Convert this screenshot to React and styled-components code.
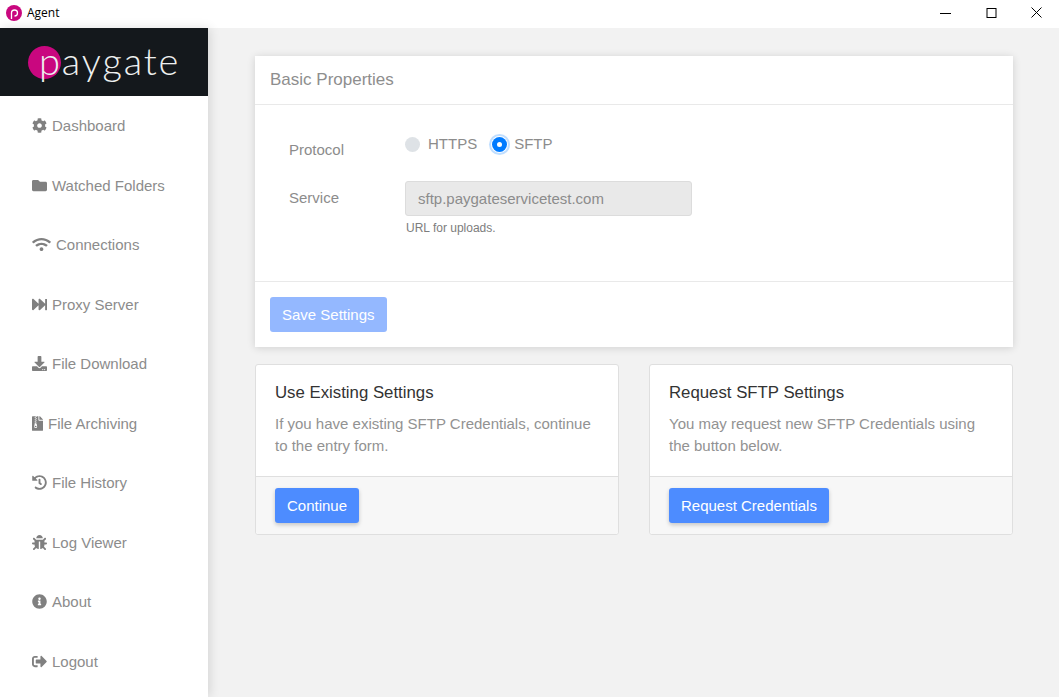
import React from 'react'
import styled, { createGlobalStyle } from 'styled-components'
import {
  FaCog, FaFolder, FaWifi, FaFastForward, FaDownload, FaFileArchive,
  FaHistory, FaBug, FaInfoCircle, FaSignOutAlt,
} from 'react-icons/fa'

const GlobalStyle = createGlobalStyle`
  html, body {
    margin: 0;
    height: 100%;
    overflow: hidden;
    font-family: "Liberation Sans", Arial, sans-serif;
  }
  * { box-sizing: border-box; }
`

const Window = styled.div`
  width: 1059px;
  height: 697px;
  display: flex;
  flex-direction: column;
  background: #f2f2f2;
`

const TitleBar = styled.div`
  height: 28px;
  flex: none;
  background: #fff;
  display: flex;
  align-items: center;
  padding: 0 0 3px 6px;
  font-size: 12px;
  color: #000;
`

const TitleName = styled.span`
  margin-left: 5px;
  flex: 1;
  font-family: "Open Sans", sans-serif;
`

const WinControls = styled.div`
  display: flex;
  height: 100%;
`

const WinButton = styled.div`
  width: 45.5px;
  height: 100%;
  display: flex;
  align-items: center;
  justify-content: center;
  padding-left: 1px;
`

const Shell = styled.div`
  flex: 1;
  display: flex;
  min-height: 0;
`

const Sidebar = styled.aside`
  width: 208px;
  flex: none;
  background: #fff;
  box-shadow: 2px 0 10px rgba(0, 0, 0, 0.12);
  display: flex;
  flex-direction: column;
`

const Brand = styled.div`
  height: 68px;
  background: #14181c;
  display: flex;
  align-items: center;
  padding-left: 28px;
`

const BrandMark = styled.span`
  width: 33px;
  height: 33px;
  border-radius: 50%;
  background: #c9077f;
  display: block;
  flex: none;
`

const BrandName = styled.span`
  margin-left: -22px;
  font-family: Lato, sans-serif;
  font-weight: 300;
  font-size: 38px;
  line-height: 33px;
  letter-spacing: 1.9px;
  color: #eef0f0;
  position: relative;
  top: -2px;
`

const Nav = styled.nav`
  display: flex;
  flex-direction: column;
`

const NavItem = styled.a`
  height: 59.5px;
  display: flex;
  align-items: center;
  padding-left: 32px;
  gap: 5px;
  font-size: 15px;
  color: #8c8c8c;
  svg {
    flex: none;
    width: ${p => p.$iconWidth}px;
    height: 15px;
    color: #808080;
  }
`

const Main = styled.main`
  flex: 1;
  padding: 28px 46px 0 47px;
  display: flex;
  flex-direction: column;
  gap: 17px;
`

const PropsCard = styled.section`
  background: #fff;
  box-shadow: 0 1px 8px rgba(0, 0, 0, 0.14);
  height: 291px;
  display: flex;
  flex-direction: column;
`

const PropsHeader = styled.h2`
  margin: 0;
  height: 49px;
  flex: none;
  border-bottom: 1px solid #e9e9e9;
  padding: 0 0 1px 15px;
  display: flex;
  align-items: center;
  font-size: 17px;
  font-weight: 400;
  color: #8e8e8e;
`

const PropsBody = styled.div`
  flex: 1;
  padding: 28px 34px 0;
  display: grid;
  grid-template-columns: 116px 287px;
  grid-template-rows: 48px auto;
  align-content: start;
`

const FieldLabel = styled.label`
  font-size: 15px;
  color: #8c8c8c;
  padding-top: 8px;
`

const RadioGroup = styled.div`
  display: flex;
  align-items: flex-start;
  gap: 15px;
`

const RadioOption = styled.span`
  display: flex;
  align-items: center;
  height: 20px;
  font-size: 15px;
  color: #8c8c8c;
  gap: 8px;
`

const RadioDot = styled.span`
  width: 15px;
  height: 15px;
  margin-top: 3px;
  margin-right: ${p => (p.$checked ? '-1px' : '0')};
  border-radius: 50%;
  flex: none;
  background: ${p => (p.$checked ? '#007bff' : '#dee2e6')};
  box-shadow: ${p => (p.$checked ? '0 0 0 1px #fff, 0 0 0 3px rgba(0, 123, 255, 0.25)' : 'none')};
  display: flex;
  align-items: center;
  justify-content: center;
  &::after {
    content: '';
    display: ${p => (p.$checked ? 'block' : 'none')};
    width: 5px;
    height: 5px;
    border-radius: 50%;
    background: #fff;
  }
`

const ServiceInput = styled.input`
  width: 287px;
  height: 35px;
  display: block;
  background: #e9e9e9;
  border: 1px solid #dcdcdc;
  border-radius: 3px;
  padding: 0 12px;
  font-family: inherit;
  font-size: 15px;
  color: #8c8c8c;
  outline: none;
  -webkit-text-fill-color: #8c8c8c;
  opacity: 1;
`

const Hint = styled.small`
  display: block;
  margin-top: 5px;
  margin-left: 1px;
  font-size: 12px;
  color: #7d7d7d;
`

const PropsFooter = styled.div`
  height: 66px;
  flex: none;
  border-top: 1px solid #e9e9e9;
  padding: 15px;
`

const Button = styled.button`
  height: 35px;
  padding: 0 12px;
  border: none;
  border-radius: 3px;
  font-family: inherit;
  font-size: 15px;
  color: #fff;
  background: ${p => (p.$faded ? '#94b8ff' : '#4d8cff')};
  box-shadow: ${p => (p.$faded ? 'none' : '0 2px 4px rgba(0, 0, 0, 0.2)')};
`

const CardRow = styled.div`
  display: grid;
  grid-template-columns: 364px 364px;
  gap: 30px;
`

const ActionCard = styled.section`
  background: #fff;
  border: 1px solid #dfdfdf;
  border-radius: 3px;
  height: 171px;
  display: flex;
  flex-direction: column;
`

const ActionBody = styled.div`
  height: 111px;
  flex: none;
  padding: 19px 19px 0;
`

const ActionTitle = styled.h3`
  margin: 0 0 11px;
  font-size: 16.8px;
  line-height: 18px;
  font-weight: 400;
  color: #333;
`

const ActionText = styled.p`
  margin: 0;
  font-size: 15px;
  line-height: 22px;
  color: #929292;
`

const ActionFooter = styled.div`
  flex: 1;
  background: #f7f7f7;
  border-top: 1px solid #dfdfdf;
  border-radius: 0 0 3px 3px;
  padding: 11px 19px;
`

const navItems = [
  { label: 'Dashboard', icon: FaCog, width: 15 },
  { label: 'Watched Folders', icon: FaFolder, width: 15 },
  { label: 'Connections', icon: FaWifi, width: 19 },
  { label: 'Proxy Server', icon: FaFastForward, width: 15 },
  { label: 'File Download', icon: FaDownload, width: 15 },
  { label: 'File Archiving', icon: FaFileArchive, width: 11 },
  { label: 'File History', icon: FaHistory, width: 15 },
  { label: 'Log Viewer', icon: FaBug, width: 15 },
  { label: 'About', icon: FaInfoCircle, width: 15 },
  { label: 'Logout', icon: FaSignOutAlt, width: 15 },
]

function AppGlyph() {
  return (
    <svg width="16" height="16" viewBox="0 0 16 16">
      <circle cx="8" cy="8" r="8" fill="#c9077f" />
      <path d="M5.5 14V8a3 3 0 1 1 3 3" fill="none" stroke="#fff" strokeWidth="1.3" />
    </svg>
  )
}

export default function App() {
  return (
    <Window>
      <GlobalStyle />
      <TitleBar>
        <AppGlyph />
        <TitleName>Agent</TitleName>
        <WinControls>
          <WinButton>
            <svg width="11" height="11" viewBox="0 0 11 11"><path d="M0 6.5h11" stroke="#000" /></svg>
          </WinButton>
          <WinButton>
            <svg width="11" height="11" viewBox="0 0 11 11"><rect x="1" y="1.5" width="9" height="9" fill="none" stroke="#000" /></svg>
          </WinButton>
          <WinButton>
            <svg width="11" height="11" viewBox="0 0 11 11"><path d="M.5.5l10 10M10.5.5l-10 10" stroke="#000" /></svg>
          </WinButton>
        </WinControls>
      </TitleBar>
      <Shell>
        <Sidebar>
          <Brand>
            <BrandMark />
            <BrandName>paygate</BrandName>
          </Brand>
          <Nav>
            {navItems.map(({ label, icon: Icon, width }) => (
              <NavItem key={label} $iconWidth={width}>
                <Icon />
                {label}
              </NavItem>
            ))}
          </Nav>
        </Sidebar>
        <Main>
          <PropsCard>
            <PropsHeader>Basic Properties</PropsHeader>
            <PropsBody>
              <FieldLabel>Protocol</FieldLabel>
              <RadioGroup>
                <RadioOption><RadioDot />HTTPS</RadioOption>
                <RadioOption><RadioDot $checked />SFTP</RadioOption>
              </RadioGroup>
              <FieldLabel>Service</FieldLabel>
              <div>
                <ServiceInput disabled value="sftp.paygateservicetest.com" readOnly />
                <Hint>URL for uploads.</Hint>
              </div>
            </PropsBody>
            <PropsFooter>
              <Button $faded>Save Settings</Button>
            </PropsFooter>
          </PropsCard>
          <CardRow>
            <ActionCard>
              <ActionBody>
                <ActionTitle>Use Existing Settings</ActionTitle>
                <ActionText>If you have existing SFTP Credentials, continue to the entry form.</ActionText>
              </ActionBody>
              <ActionFooter><Button>Continue</Button></ActionFooter>
            </ActionCard>
            <ActionCard>
              <ActionBody>
                <ActionTitle>Request SFTP Settings</ActionTitle>
                <ActionText>You may request new SFTP Credentials using the button below.</ActionText>
              </ActionBody>
              <ActionFooter><Button>Request Credentials</Button></ActionFooter>
            </ActionCard>
          </CardRow>
        </Main>
      </Shell>
    </Window>
  )
}
